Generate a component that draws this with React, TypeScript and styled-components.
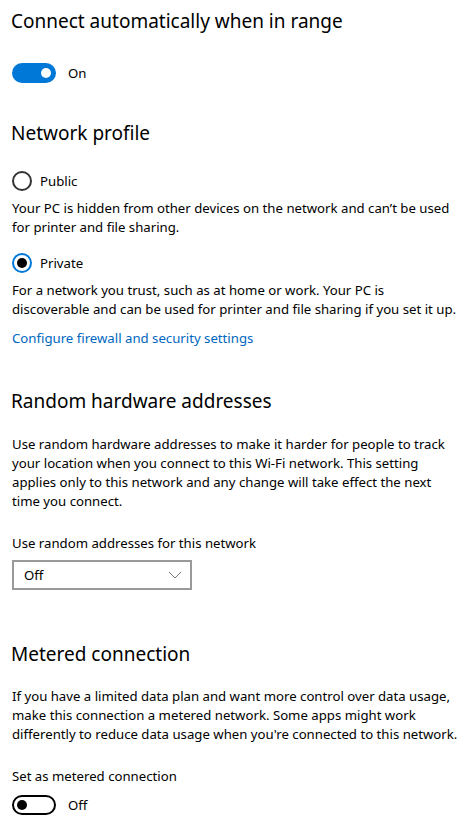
import styled, { createGlobalStyle } from "styled-components";

const GlobalStyle = createGlobalStyle`
  body {
    margin: 0;
    background: #ffffff;
    font-family: "Noto Sans", "Open Sans", sans-serif;
    color: #000000;
  }
`;

const Page = styled.div`
  padding: 7px 12px 0 12px;
  display: flex;
  flex-direction: column;
`;

const Heading = styled.h2<{ $top: number }>`
  margin: ${(p) => p.$top}px 0 0 -1px;
  font-size: 19px;
  line-height: 28px;
  font-weight: 400;
`;

const Text = styled.p<{ $top: number }>`
  margin: ${(p) => p.$top}px 0 0 0;
  font-size: 13.2px;
  line-height: 19px;
  white-space: nowrap;
`;

const Link = styled.a`
  margin-top: 10px;
  font-size: 13.2px;
  line-height: 19px;
  color: #0067c0;
  text-decoration: none;
`;

const ToggleRow = styled.div<{ $top: number }>`
  margin-top: ${(p) => p.$top}px;
  display: flex;
  align-items: center;
  gap: 12px;
  height: 20px;
`;

const Track = styled.div<{ $on: boolean }>`
  width: 44px;
  height: 20px;
  box-sizing: border-box;
  border-radius: 10px;
  border: 2px solid ${(p) => (p.$on ? "#0078d7" : "#000000")};
  background: ${(p) => (p.$on ? "#0078d7" : "#ffffff")};
  display: flex;
  align-items: center;
  justify-content: ${(p) => (p.$on ? "flex-end" : "flex-start")};
  padding: 0 3px;
`;

const Knob = styled.div<{ $on: boolean }>`
  width: 10px;
  height: 10px;
  border-radius: 50%;
  background: ${(p) => (p.$on ? "#ffffff" : "#000000")};
`;

const ToggleLabel = styled.span`
  font-size: 13.2px;
  line-height: 19px;
`;

const RadioRow = styled.div<{ $top: number }>`
  margin-top: ${(p) => p.$top}px;
  display: flex;
  align-items: center;
  gap: 8px;
  height: 20px;
`;

const RadioCircle = styled.div<{ $checked: boolean }>`
  width: 20px;
  height: 20px;
  box-sizing: border-box;
  border-radius: 50%;
  border: 2px solid ${(p) => (p.$checked ? "#0078d7" : "#333333")};
  display: flex;
  align-items: center;
  justify-content: center;
`;

const RadioDot = styled.div`
  width: 10px;
  height: 10px;
  border-radius: 50%;
  background: #000000;
`;

const Select = styled.div`
  margin-top: 7px;
  width: 180px;
  height: 30px;
  box-sizing: border-box;
  border: 2px solid #999999;
  display: flex;
  align-items: center;
  justify-content: space-between;
  padding: 0 8px 0 10px;
  font-size: 13.2px;
`;

function Toggle({ on, top, label }: { on: boolean; top: number; label: string }) {
  return (
    <ToggleRow $top={top}>
      <Track $on={on}>
        <Knob $on={on} />
      </Track>
      <ToggleLabel>{label}</ToggleLabel>
    </ToggleRow>
  );
}

function Radio({ checked, top, label }: { checked: boolean; top: number; label: string }) {
  return (
    <RadioRow $top={top}>
      <RadioCircle $checked={checked}>{checked && <RadioDot />}</RadioCircle>
      <ToggleLabel>{label}</ToggleLabel>
    </RadioRow>
  );
}

export default function App() {
  return (
    <>
      <GlobalStyle />
      <Page>
        <Heading $top={0}>Connect automatically when in range</Heading>
        <Toggle on top={28} label="On" />

        <Heading $top={36}>Network profile</Heading>
        <Radio checked={false} top={24} label="Public" />
        <Text $top={8}>
          Your PC is hidden from other devices on the network and can’t be used
          <br />
          for printer and file sharing.
        </Text>
        <Radio checked top={16} label="Private" />
        <Text $top={8}>
          For a network you trust, such as at home or work. Your PC is
          <br />
          discoverable and can be used for printer and file sharing if you set it up.
        </Text>
        <Link href="#">Configure firewall and security settings</Link>

        <Heading $top={39}>Random hardware addresses</Heading>
        <Text $top={20}>
          Use random hardware addresses to make it harder for people to track
          <br />
          your location when you connect to this Wi-Fi network. This setting
          <br />
          applies only to this network and any change will take effect the next
          <br />
          time you connect.
        </Text>
        <Text $top={23}>Use random addresses for this network</Text>
        <Select>
          <span>Off</span>
          <svg width="14" height="8" viewBox="0 0 14 8">
            <path d="M1 1 L7 7 L13 1" fill="none" stroke="#777" strokeWidth="1" />
          </svg>
        </Select>

        <Heading $top={50}>Metered connection</Heading>
        <Text $top={19}>
          If you have a limited data plan and want more control over data usage,
          <br />
          make this connection a metered network. Some apps might work
          <br />
          differently to reduce data usage when you're connected to this network.
        </Text>
        <Text $top={23}>Set as metered connection</Text>
        <Toggle on={false} top={9} label="Off" />
      </Page>
    </>
  );
}
